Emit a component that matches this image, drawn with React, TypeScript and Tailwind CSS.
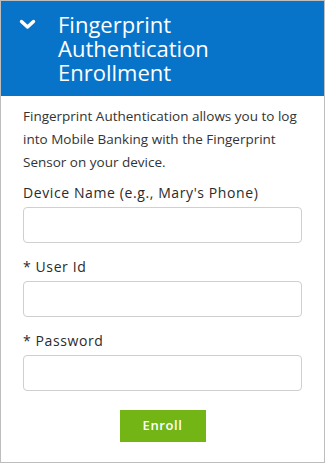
const font = { fontFamily: '"Open Sans", "Noto Sans", sans-serif' };

function Field({ label }: { label: string }) {
  return (
    <div className="flex flex-col">
      <label className="text-[14px] leading-[18px] tracking-[0.6px] font-medium text-[#2b2b2b]">{label}</label>
      <input
        type="text"
        className="mt-[5px] h-[36px] w-full rounded-[4px] border border-[#cfcfcf] bg-white px-2 outline-none"
      />
    </div>
  );
}

export default function App() {
  return (
    <div className="h-[464px] w-[325px] bg-white" style={font}>
      <div className="h-[463px] border border-[#bdbdbd] flex flex-col">
        <div className="flex bg-[#0874c9] h-[95px] pt-[11px] pl-[18px]">
          {/* chevron */}
          <svg className="mt-[7px] shrink-0" width="17" height="11" viewBox="0 0 17 11">
            <polyline
              points="2.5,2.5 8.5,8 14.5,2.5"
              fill="none"
              stroke="white"
              strokeWidth="3.4"
              strokeLinecap="round"
              strokeLinejoin="round"
            />
          </svg>
          <h1 className="ml-[22px] text-[22px] leading-[24px] text-white font-normal">
            Fingerprint
            <br />
            Authentication
            <br />
            Enrollment
          </h1>
        </div>
        <div className="flex flex-col px-[22px] pt-[9px]">
          <p className="text-[13.5px] leading-[23px] text-[#333333]">
            Fingerprint Authentication allows you to log into Mobile Banking with the Fingerprint Sensor on your device.
          </p>
          <div className="mt-[10px] flex flex-col gap-[15px]">
            <Field label="Device Name (e.g., Mary's Phone)" />
            <Field label="* User Id" />
            <Field label="* Password" />
          </div>
          <div className="mt-[19px] flex justify-center">
            <button className="h-[32px] w-[86px] bg-[#72b514] text-white text-[13px] font-semibold tracking-[0.6px]">
              Enroll
            </button>
          </div>
        </div>
      </div>
    </div>
  );
}
